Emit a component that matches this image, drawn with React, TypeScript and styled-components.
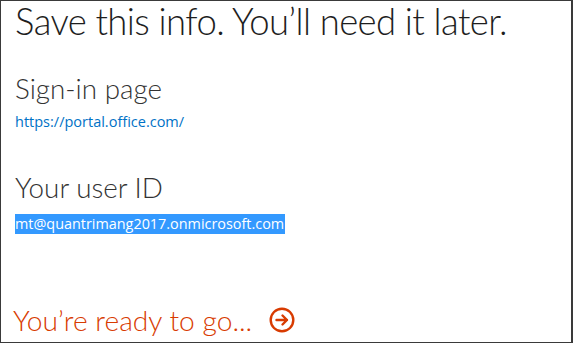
import React from "react";
import styled, { createGlobalStyle } from "styled-components";

const Global = createGlobalStyle`
  html, body { margin: 0; padding: 0; background: #fff; }
  * { box-sizing: border-box; }
`;

const Frame = styled.div`
  width: 573px;
  height: 343px;
  border: 1px solid #3a3a3a;
  border-right-width: 2px;
  background: #fff;
  padding: 0 0 0 14px;
  display: flex;
  flex-direction: column;
  font-family: "Lato", "Segoe UI", sans-serif;
  overflow: hidden;
`;

const Title = styled.h1`
  margin: 0;
  font-weight: 300;
  font-size: 36.5px;
  line-height: 40px;
  letter-spacing: -0.6px;
  color: #1e1e1e;
  white-space: nowrap;
`;

const Section = styled.section<{ $top: number }>`
  margin-top: ${(p) => p.$top}px;
  display: flex;
  flex-direction: column;
  align-items: flex-start;
`;

const Heading = styled.h2`
  margin: 0;
  font-weight: 300;
  font-size: 27.8px;
  line-height: 32px;
  color: #333;
`;

const Link = styled.a`
  margin-top: 8px;
  font-family: "Open Sans", sans-serif;
  font-size: 14.5px;
  line-height: 18px;
  color: #0072c6;
  text-decoration: none;
  font-weight: 400;
`;

const Selected = styled.span`
  margin-top: 10px;
  font-family: "Open Sans", sans-serif;
  font-size: 14.4px;
  line-height: 20px;
  background: #3399ff;
  color: #fff;
  padding-right: 1px;
`;

const Footer = styled.div`
  margin-top: auto;
  margin-bottom: 5px;
  margin-left: -2px;
  display: flex;
  align-items: center;
  gap: 17px;
  color: #d83b01;
`;

const Ready = styled.span`
  font-weight: 300;
  font-size: 28.2px;
  line-height: 34px;
`;

const ArrowIcon = () => (
  <svg width="26" height="26" viewBox="0 0 26 26" fill="none" stroke="#d83b01" strokeWidth="2.4" strokeLinecap="round" strokeLinejoin="round">
    <circle cx="13" cy="13" r="11.3" />
    <path d="M7.5 13h10.5M13.5 8.5 18 13l-4.5 4.5" />
  </svg>
);

export default function App() {
  return (
    <>
      <Global />
      <Frame>
        <Title>Save this info. You’ll need it later.</Title>
        <Section $top={32}>
          <Heading>Sign-in page</Heading>
          <Link href="#">https://portal.office.com/</Link>
        </Section>
        <Section $top={41}>
          <Heading>Your user ID</Heading>
          <Selected>mt@quantrimang2017.onmicrosoft.com</Selected>
        </Section>
        <Footer>
          <Ready>You’re ready to go...</Ready>
          <ArrowIcon />
        </Footer>
      </Frame>
    </>
  );
}
